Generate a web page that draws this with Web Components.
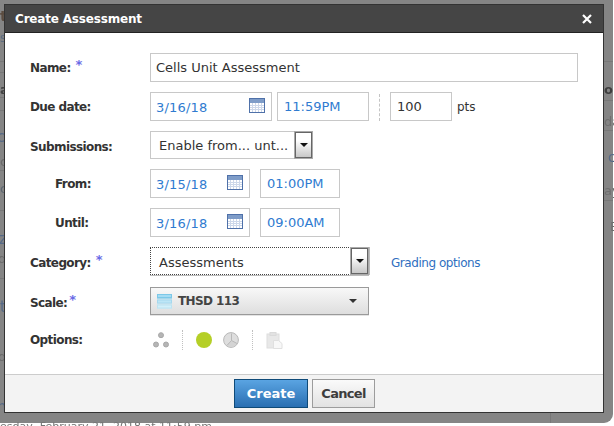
<!DOCTYPE html>
<html>
<head>
<meta charset="utf-8">
<title>Create Assessment</title>
<style>
  html, body { margin: 0; height: 426px; overflow: hidden; background: #fff; }
  body { font-family: "DejaVu Sans", Verdana, sans-serif; }
</style>
</head>
<body>
<modal-frame heading="Create Assessment">
  <page-ghost slot="ghost"></page-ghost>

  <form-row label="Name:" required>
    <text-field wide value="Cells Unit Assessment"></text-field>
  </form-row>

  <form-row label="Due date:">
    <date-field width="122" value="3/16/18"></date-field>
    <text-field width="92" link value="11:59PM"></text-field>
    <dash-rule></dash-rule>
    <text-field width="62" value="100"></text-field>
    <span style="font-size:12px;color:#333">pts</span>
  </form-row>

  <form-row label="Submissions:" short>
    <drop-list width="163" value="Enable from... unt..."></drop-list>
  </form-row>

  <form-row label="From:" indent>
    <date-field width="100" value="3/15/18"></date-field>
    <text-field width="80" gap link value="01:00PM"></text-field>
  </form-row>

  <form-row label="Until:" indent>
    <date-field width="100" value="3/16/18"></date-field>
    <text-field width="80" gap link value="09:00AM"></text-field>
  </form-row>

  <form-row label="Category:" required short>
    <drop-list width="219" focused value="Assessments"></drop-list>
    <span style="font-size:12px;letter-spacing:-.45px;color:#2f6fc0;margin:3px 0 0 17px">Grading options</span>
  </form-row>

  <form-row label="Scale:" required tight short>
    <scale-picker value="THSD 113"></scale-picker>
  </form-row>

  <form-row label="Options:">
    <option-icons></option-icons>
  </form-row>

  <ui-button slot="footer" primary>Create</ui-button>
  <ui-button slot="footer">Cancel</ui-button>
</modal-frame>

<script>
class ModalFrame extends HTMLElement {
  connectedCallback() {
    this.attachShadow({ mode: 'open' });
    this.shadowRoot.innerHTML = `
      <style>
        :host { display: block; width: 613px; height: 423px; position: relative;
          background: #858585; border-radius: 0 0 9px 0; box-sizing: border-box; padding: 4px; }
        .dialog { position: relative; width: 600px; height: 409px; box-sizing: border-box;
          border: 1px solid #333; background: #fff; display: flex; flex-direction: column; }
        header { height: 28px; box-sizing: border-box; background: #454545; border-bottom: 1px solid #222;
          display: flex; align-items: center; justify-content: space-between;
          padding: 0 11px 0 10px; color: #fff; font: bold 12px "DejaVu Sans", Verdana, sans-serif; letter-spacing: -.18px; }
        svg { display: block; }
        .body { flex: 1; padding: 20px 25px 0; display: flex; flex-direction: column; gap: 10px; }
        footer { height: 38px; background: #f3f3f3; border-top: 1px solid #ccc; display: flex;
          gap: 4px; padding: 4px 0 0 229px; box-sizing: border-box; }
      </style>
      <slot name="ghost"></slot>
      <div class="dialog">
        <header>
          <span>${this.getAttribute('heading')}</span>
          <svg width="10" height="10" viewBox="0 0 10 10"><path d="M1 1l8 8M9 1l-8 8" stroke="#fff" stroke-width="2.2"/></svg>
        </header>
        <div class="body"><slot></slot></div>
        <footer><slot name="footer"></slot></footer>
      </div>`;
  }
}
customElements.define('modal-frame', ModalFrame);

// blurred page content showing round the dialog
class PageGhost extends HTMLElement {
  connectedCallback() {
    this.attachShadow({ mode: 'open' });
    const bits = [
      [0, 8, 't', '#5b4c40', 14, 700], [0, 30, 's', '#5c6b80', 13], [0, 82, 'al', '#444', 13, 700],
      [-3, 128, 'c', '#566a88', 15], [0, 154, 'c', '#6a6a6a', 13], [0, 181, 'c', '#5d6670', 13],
      [-1, 230, 'z', '#566a88', 15], [-2, 251, 'd', '#6a6a6a', 13], [0, 298, 't', '#566a88', 15],
      [-2, 349, 'd', '#6a6a6a', 13], [-3, 398, 'h', '#566a88', 15],
      [604, 82, 'on', '#3f3f3f', 13, 700], [604, 114, 'da', '#6f6f6f', 13], [608, 149, 'c', '#566a88', 14],
      [604, 183, 'ay', '#6f6f6f', 13], [610, 219, 'E', '#6f6f6f', 13],
      [0, 420, 'esday, February 21, 2018 at 11:59 pm', '#767676', 11]
    ];
    const lines = [[0, 61, 4], [0, 72, 4], [0, 97, 4], [0, 110, 4], [0, 170, 4], [0, 210, 4], [0, 278, 4],
      [604, 61, 9], [604, 100, 9], [604, 130, 9], [604, 200, 9]];
    this.shadowRoot.innerHTML = `
      <style>
        :host { position: absolute; inset: 0; display: block; font-family: "DejaVu Sans", Verdana, sans-serif; }
        span { position: absolute; white-space: nowrap; line-height: 1.2; filter: blur(.4px); }
        i { position: absolute; height: 1px; background: #787878; }
        b { position: absolute; left: 550px; top: 413px; width: 1px; height: 10px; background: #787878; }
      </style>
      ${lines.map(l => `<i style="left:${l[0]}px;top:${l[1]}px;width:${l[2]}px"></i>`).join('')}
      <b></b>
      ${bits.map(b => `<span style="left:${b[0]}px;top:${b[1]}px;color:${b[3]};font-size:${b[4]}px;font-weight:${b[5] || 400}">${b[2]}</span>`).join('')}`;
  }
}
customElements.define('page-ghost', PageGhost);

class FormRow extends HTMLElement {
  connectedCallback() {
    this.attachShadow({ mode: 'open' });
    const req = this.hasAttribute('required') ? `<sup>*</sup>` : '';
    this.shadowRoot.innerHTML = `
      <style>
        :host { display: grid; grid-template-columns: 120px 1fr; align-items: center;
          height: 29px; font: 12px "DejaVu Sans", Verdana, sans-serif; }
        :host([short]) { height: 28px; }
        :host([short]) label { margin-top: 3px; }
        :host([tight]) { margin-top: 2px; }
        :host([indent]) label { padding-left: 25px; }
        label { font-weight: bold; color: #333; display: flex; gap: 5px; white-space: nowrap; }
        label span { letter-spacing: -.6px; }
        :host([tight]) label { gap: 2px; }
        sup { color: #6a6ae6; font-size: 13px; font-weight: bold; line-height: 10px; margin-top: -1px; }
        .fields { display: flex; align-items: center; gap: 5px; }
      </style>
      <label><span>${this.getAttribute('label')}</span>${req}</label>
      <div class="fields"><slot></slot></div>`;
  }
}
customElements.define('form-row', FormRow);

class TextField extends HTMLElement {
  connectedCallback() {
    this.attachShadow({ mode: 'open' });
    const w = this.getAttribute('width');
    this.shadowRoot.innerHTML = `
      <style>
        :host { display: block; box-sizing: border-box; height: 29px; border: 1px solid #c8c8c8; background: #fff;
          padding: 0 6px; font: 13px/28px "DejaVu Sans", Verdana, sans-serif; color: #333; white-space: nowrap;
          ${w ? `width:${w}px;` : ''} }
        :host([wide]) { width: 428px; padding: 0 5px; }
        :host([link]) { color: #2f7bd0; }
        :host([gap]) { margin-left: 5px; }
      </style>${this.getAttribute('value')}`;
  }
}
customElements.define('text-field', TextField);

class DateField extends HTMLElement {
  connectedCallback() {
    this.attachShadow({ mode: 'open' });
    this.shadowRoot.innerHTML = `
      <style>
        :host { display: flex; align-items: center; justify-content: space-between; box-sizing: border-box;
          width: ${this.getAttribute('width')}px; height: 29px; border: 1px solid #c8c8c8; background: #fff;
          padding: 1px 6px 0 5px; font: 13px "DejaVu Sans", Verdana, sans-serif; color: #2f7bd0; }
        span { letter-spacing: .2px; }
        svg { display: block; margin-top: -3px; }
      </style>
      <span>${this.getAttribute('value')}</span>
      <svg width="16" height="15" viewBox="0 0 16 15">
        <rect x=".5" y=".5" width="15" height="14" fill="#fff" stroke="#4f71a9"/>
        <rect x="1" y="1" width="14" height="4" fill="#7e9cc8"/>
        <path d="M1 7.5h14M1 9.5h14M1 11.5h14M3.5 5v9M6.5 5v9M9.5 5v9M12.5 5v9" stroke="#cdd8ea" fill="none"/>
      </svg>`;
  }
}
customElements.define('date-field', DateField);

class DashRule extends HTMLElement {
  connectedCallback() {
    this.attachShadow({ mode: 'open' });
    this.shadowRoot.innerHTML = `
      <style>:host { display: block; height: 27px; margin: 2px 5px 0 5px; border-left: 1px dashed #c4c4c4; }</style>`;
  }
}
customElements.define('dash-rule', DashRule);

class DropList extends HTMLElement {
  connectedCallback() {
    this.attachShadow({ mode: 'open' });
    this.shadowRoot.innerHTML = `
      <style>
        :host { display: flex; justify-content: space-between; box-sizing: border-box;
          width: ${this.getAttribute('width')}px; height: 28px; border: 1px solid #c8c8c8; background: #fff;
          font: 13px/28px "DejaVu Sans", Verdana, sans-serif; color: #333; white-space: nowrap; padding-left: 8px; }
        :host([focused]) { border: 1px dotted #444; box-shadow: 0 1px 0 #bbb, 1px 0 0 #bbb; line-height: 30px; }
        .btn { box-sizing: border-box; width: 17px; height: 26px; border: 1px solid #666; outline: 1px solid #aaa; outline-offset: 0;
          background: linear-gradient(#fff 30%, #c8c8c8); display: flex; justify-content: center; padding-top: 10px; }
        .btn i { width: 0; height: 0; border: 4px solid transparent; border-top-color: #111; border-bottom: 0; }
      </style>
      <span>${this.getAttribute('value')}</span>
      <div class="btn"><i></i></div>`;
  }
}
customElements.define('drop-list', DropList);

class ScalePicker extends HTMLElement {
  connectedCallback() {
    this.attachShadow({ mode: 'open' });
    this.shadowRoot.innerHTML = `
      <style>
        :host { display: flex; align-items: center; gap: 6px; box-sizing: border-box; width: 219px; height: 28px;
          border: 1px solid #9a9a9a; background: linear-gradient(#f8f8f8, #dedede); padding: 0 10px 0 6px;
          font: bold 12px "DejaVu Sans", Verdana, sans-serif; color: #444; box-shadow: 0 1px 0 #e4e4e4; }
        svg { display: block; }
        span { flex: 1; letter-spacing: -.6px; }
        i { width: 0; height: 0; border: 4px solid transparent; border-top-color: #333; border-bottom: 0; margin-right: 1px; }
      </style>
      <svg width="15" height="15" viewBox="0 0 15 15">
        <rect width="15" height="15" fill="#d2e6ee"/>
        <rect x="0" y="0" width="15" height="4.5" fill="#7cc8e8"/><rect x="1" y="1" width="13" height="2" fill="#a5dcf3"/>
        <rect x="0" y="5.5" width="15" height="4" fill="#a5d8ee"/><rect x="1" y="6.5" width="13" height="2" fill="#bde6f6"/>
        <rect x="0" y="10.5" width="15" height="4" fill="#bde3f1"/><rect x="1" y="11.5" width="13" height="2" fill="#d2f0fa"/>
      </svg>
      <span>${this.getAttribute('value')}</span><i></i>`;
  }
}
customElements.define('scale-picker', ScalePicker);

class OptionIcons extends HTMLElement {
  connectedCallback() {
    this.attachShadow({ mode: 'open' });
    this.shadowRoot.innerHTML = `
      <style>
        :host { display: flex; align-items: center; height: 20px; margin-top: 1px; }
        svg { display: block; }
        .sep { width: 0; height: 20px; border-left: 1px dotted #c0c0c0; }
      </style>
      <svg style="margin-left:3px" width="16" height="16" viewBox="0 0 16 16" fill="#b5b5b5" stroke="#a8a8a8">
        <circle cx="8" cy="3.2" r="2.5"/><circle cx="3" cy="12.5" r="2.5"/><circle cx="13" cy="12.5" r="2.5"/>
      </svg>
      <div class="sep" style="margin-left:13px"></div>
      <svg style="margin-left:13px" width="16" height="16" viewBox="0 0 16 16"><circle cx="8" cy="8" r="8" fill="#b5cf27"/></svg>
      <svg style="margin-left:11px" width="16" height="16" viewBox="0 0 16 16" fill="#dedede" stroke="#b8b8b8">
        <circle cx="8" cy="8" r="7.4"/>
        <path d="M8.5 8.5l5.4 3A6.2 6.2 0 0 1 4 12.9z" fill="#d4d4d4" stroke="none"/>
        <path d="M8.5 8.5V1.5M8.5 8.5l5.6 3M8.5 8.5l-4.6 5" fill="none" stroke="#b4b4b4" stroke-width=".9"/>
      </svg>
      <div class="sep" style="margin-left:13px"></div>
      <svg style="margin-left:13px" width="17" height="17" viewBox="0 0 17 17">
        <rect x="1" y="2" width="12" height="14" fill="#e8e8e8" stroke="#dedede"/>
        <rect x="4" y="0.5" width="6" height="3" fill="#e2e2e2" stroke="#dadada"/>
        <path d="M7.5 8.5h5l3.5 3v5h-8.5z" fill="#f8f8f8" stroke="#e0e0e0"/>
      </svg>`;
  }
}
customElements.define('option-icons', OptionIcons);

class UiButton extends HTMLElement {
  connectedCallback() {
    this.attachShadow({ mode: 'open' });
    this.shadowRoot.innerHTML = `
      <style>
        :host { display: block; box-sizing: border-box; width: 63px; height: 29px; border: 1px solid #9c9c9c;
          background: linear-gradient(#fafafa, #e2e2e2); color: #3d3d3d; letter-spacing: -.7px;
          font: bold 13px/28px "DejaVu Sans", Verdana, sans-serif; text-align: center; }
        :host([primary]) { width: 74px; letter-spacing: 0; border-color: #0f4a78; color: #fff; background: linear-gradient(#5aa4e2, #2a6fb2); }
      </style><slot></slot>`;
  }
}
customElements.define('ui-button', UiButton);
</script>
</body>
</html>
